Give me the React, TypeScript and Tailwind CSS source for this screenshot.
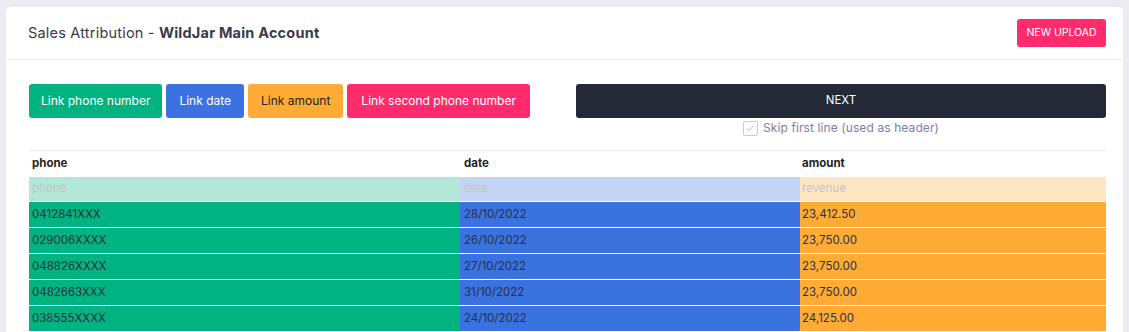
import React from "react";

const rows = [
  ["0412841XXX", "28/10/2022", "23,412.50"],
  ["029006XXXX", "26/10/2022", "23,750.00"],
  ["048826XXXX", "27/10/2022", "23,750.00"],
  ["0482663XXX", "31/10/2022", "23,750.00"],
  ["038555XXXX", "24/10/2022", "24,125.00"],
];

export default function App() {
  return (
    <div
      className="w-[1129px] h-[332px] overflow-hidden bg-[#ebebf1] pt-[7px] pl-[6px] pr-[6px]"
      style={{ fontFamily: "Inter, 'Noto Sans', sans-serif" }}
    >
      <div className="bg-white rounded-[5px] h-[400px]">
        <div className="h-[53px] flex items-center justify-between pl-[22px] pr-[17px] border-b border-[#e9e9ef]">
          <div className="text-[14.5px] text-[#3a3a4c] tracking-[0.2px]">
            Sales Attribution - <span className="font-bold">WildJar Main Account</span>
          </div>
          <button className="h-[28px] w-[89px] rounded-[3px] bg-[#ff2b6c] text-white text-[10.5px] uppercase">
            New upload
          </button>
        </div>
        <div className="pl-[23px] pr-[17px] pt-[24px]">
          <div className="flex items-start">
            <div className="flex-1 flex gap-[4px]">
              <button className="h-[34px] px-[12px] rounded-[3px] bg-[#00b381] text-white text-[12px]">
                Link phone number
              </button>
              <button className="h-[34px] px-[13px] rounded-[3px] bg-[#3b72e0] text-white text-[12px]">
                Link date
              </button>
              <button className="h-[34px] px-[13px] rounded-[3px] bg-[#ffac37] text-[#222] text-[12px]">
                Link amount
              </button>
              <button className="h-[34px] px-[14px] rounded-[3px] bg-[#ff2b6c] text-white text-[12px]">
                Link second phone number
              </button>
            </div>
            <div className="w-[530px] flex flex-col items-center">
              <button className="w-full h-[34px] rounded-[3px] bg-[#252836] text-white text-[11.5px]">
                NEXT
              </button>
              <label className="mt-[1px] flex items-center gap-[5px] text-[12px] text-[#7c80a0] tracking-[0.1px]">
                <span className="w-[15px] h-[15px] border border-[#c9cbdc] rounded-[2px] flex items-center justify-center">
                  <svg width="10" height="10" viewBox="0 0 10 10">
                    <path d="M1.5 5.2 L4 7.6 L8.6 2.4" fill="none" stroke="#b8bbd0" strokeWidth="1" />
                  </svg>
                </span>
                Skip first line (used as header)
              </label>
            </div>
          </div>
          <table className="mt-[13px] w-full border-collapse table-fixed text-[11.5px] text-[#2b3140]">
            <colgroup>
              <col className="w-[431px]" />
              <col className="w-[340px]" />
              <col />
            </colgroup>
            <thead>
              <tr className="h-[26px] border-t border-[#e9e9ef]">
                <th className="text-left font-bold pl-[3px] text-[#1f1f24]">phone</th>
                <th className="text-left font-bold pl-[4px] text-[#1f1f24]">date</th>
                <th className="text-left font-bold pl-[2px] text-[#1f1f24]">amount</th>
              </tr>
            </thead>
            <tbody>
              <tr className="h-[25px] text-[#c2c4c8]">
                <td className="bg-[#b3e8d8] pl-[3px]">phone</td>
                <td className="bg-[#c4d4f5] pl-[4px]">date</td>
                <td className="bg-[#ffe6c3] pl-[2px]">revenue</td>
              </tr>
              {rows.map((r, i) => (
                <tr key={i} className="h-[26px] border-t border-white">
                  <td className="bg-[#00b381] pl-[3px]">{r[0]}</td>
                  <td className="bg-[#3a72e0] pl-[4px]">{r[1]}</td>
                  <td className="bg-[#ffac37] pl-[2px]">{r[2]}</td>
                </tr>
              ))}
              <tr className="h-[26px] border-t border-white">
                <td className="bg-[#00b381]"></td>
                <td className="bg-[#3a72e0]"></td>
                <td className="bg-[#ffac37]"></td>
              </tr>
            </tbody>
          </table>
        </div>
      </div>
    </div>
  );
}
